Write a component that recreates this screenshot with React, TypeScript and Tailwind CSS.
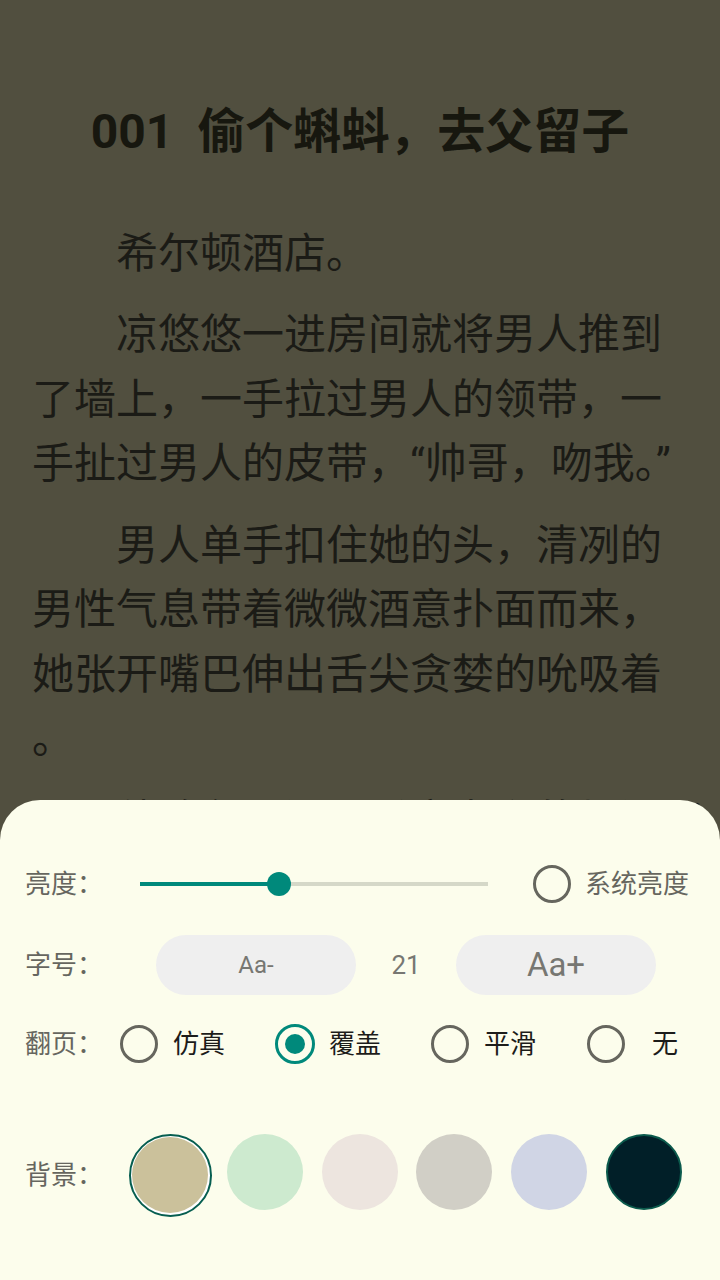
import React from 'react';

const paragraphs: string[][] = [
  ['希尔顿酒店。'],
  ['凉悠悠一进房间就将男人推到', '了墙上，一手拉过男人的领带，一', '手扯过男人的皮带，“帅哥，吻我。”'],
  ['男人单手扣住她的头，清冽的', '男性气息带着微微酒意扑面而来，', '她张开嘴巴伸出舌尖贪婪的吮吸着', '。'],
  ['他眸色一深，反客为主的加深了'],
];

const swatches = [
  { color: 'bg-[#cbc19b]', selected: true },
  { color: 'bg-[#cdeacf]', selected: false },
  { color: 'bg-[#ede5df]', selected: false },
  { color: 'bg-[#d1cfc6]', selected: false },
  { color: 'bg-[#d0d5e5]', selected: false },
  { color: 'bg-[#011f28] border-2 border-[#0b5a4c]', selected: false },
];

const Radio: React.FC<{ checked?: boolean }> = ({ checked }) =>
  checked ? (
    <span className="flex h-[40px] w-[40px] shrink-0 items-center justify-center rounded-full border-[3.5px] border-[#00897b]">
      <span className="block h-[20px] w-[20px] rounded-full bg-[#00897b]" />
    </span>
  ) : (
    <span className="block h-[38px] w-[38px] shrink-0 rounded-full border-[3px] border-[#66665e]" />
  );

const flipModes = [
  { name: '仿真', checked: false, gap: 'ml-[15px]' },
  { name: '覆盖', checked: true, gap: 'ml-[14px]' },
  { name: '平滑', checked: false, gap: 'ml-[15px]' },
  { name: '无', checked: false, gap: 'ml-[27px]' },
];

const App: React.FC = () => {
  return (
    <div className="relative h-[1280px] w-[720px] overflow-hidden bg-[#514f3f] font-[Roboto,'Noto_Sans_CJK_SC',sans-serif]">
      {/* Reading page */}
      <div className="pt-[104px]">
        <h1 className="whitespace-pre text-center text-[48px] font-bold leading-[56px] text-[#17170f]">
          {'001  偷个蝌蚪，去父留子'}
        </h1>
        <div className="mt-[61.75px] pl-[32px] text-[42px] text-[#1b1b16]">
          {paragraphs.map((lines, i) => (
            <div key={i} className="mb-[17px]">
              {lines.map((line, j) => (
                <div
                  key={j}
                  className={`h-[64.5px] whitespace-nowrap leading-[64.5px] ${j === 0 ? 'pl-[84px]' : ''}`}
                >
                  {line}
                </div>
              ))}
            </div>
          ))}
        </div>
      </div>

      {/* Settings sheet */}
      <div className="absolute bottom-0 left-0 right-0 h-[480px] rounded-t-[40px] bg-[#fcfdec] text-[26px] text-[#66665f]">
        {/* Brightness */}
        <div className="mt-[54px] flex h-[60px] items-center pl-[25px]">
          <span className="w-[115px] shrink-0">亮度：</span>
          <div className="relative h-[4px] w-[348px] shrink-0 bg-[#d5d8c8]">
            <div className="h-full w-[139px] bg-[#00897b]" />
            <div className="absolute left-[127px] top-[-10px] h-[24px] w-[24px] rounded-full bg-[#00897b]" />
          </div>
          <span className="ml-[45px] shrink-0">
            <Radio />
          </span>
          <span className="ml-[14px] whitespace-nowrap">系统亮度</span>
        </div>

        {/* Font size */}
        <div className="mt-[21px] flex h-[60px] items-center pl-[25px]">
          <span className="w-[131px] shrink-0">字号：</span>
          <button className="flex h-[60px] w-[200px] shrink-0 items-center justify-center rounded-full bg-[#efefef] text-[24px] text-[#777772]">
            Aa-
          </button>
          <span className="w-[100px] shrink-0 text-center text-[26px] text-[#777772]">21</span>
          <button className="flex h-[60px] w-[200px] shrink-0 items-center justify-center rounded-full bg-[#efefef] text-[33px] text-[#777772]">
            Aa+
          </button>
        </div>

        {/* Page flip */}
        <div className="mt-[19px] flex h-[60px] items-center pl-[25px]">
          <span className="w-[95px] shrink-0">翻页：</span>
          {flipModes.map((m) => (
            <div key={m.name} className={`flex w-[156px] shrink-0 items-center ${m.checked ? '-ml-px' : ''}`}>
              <Radio checked={m.checked} />
              <span className={`${m.gap} whitespace-nowrap text-[#1c1c1a]`}>{m.name}</span>
            </div>
          ))}
        </div>

        {/* Background */}
        <div className="mt-[59px] flex h-[84px] items-center pl-[25px]">
          <span className="w-[98px] shrink-0">背景：</span>
          <div className="grid w-[568px] shrink-0 grid-cols-6 justify-items-center">
            {swatches.map((s, i) =>
              s.selected ? (
                <div
                  key={i}
                  className="flex h-[83px] w-[83px] items-center justify-center rounded-full border-2 border-[#065e50] bg-white"
                >
                  <div className={`h-[76px] w-[76px] rounded-full ${s.color}`} />
                </div>
              ) : (
                <div key={i} className={`h-[76px] w-[76px] rounded-full ${s.color}`} />
              )
            )}
          </div>
        </div>
      </div>
    </div>
  );
};

export default App;
